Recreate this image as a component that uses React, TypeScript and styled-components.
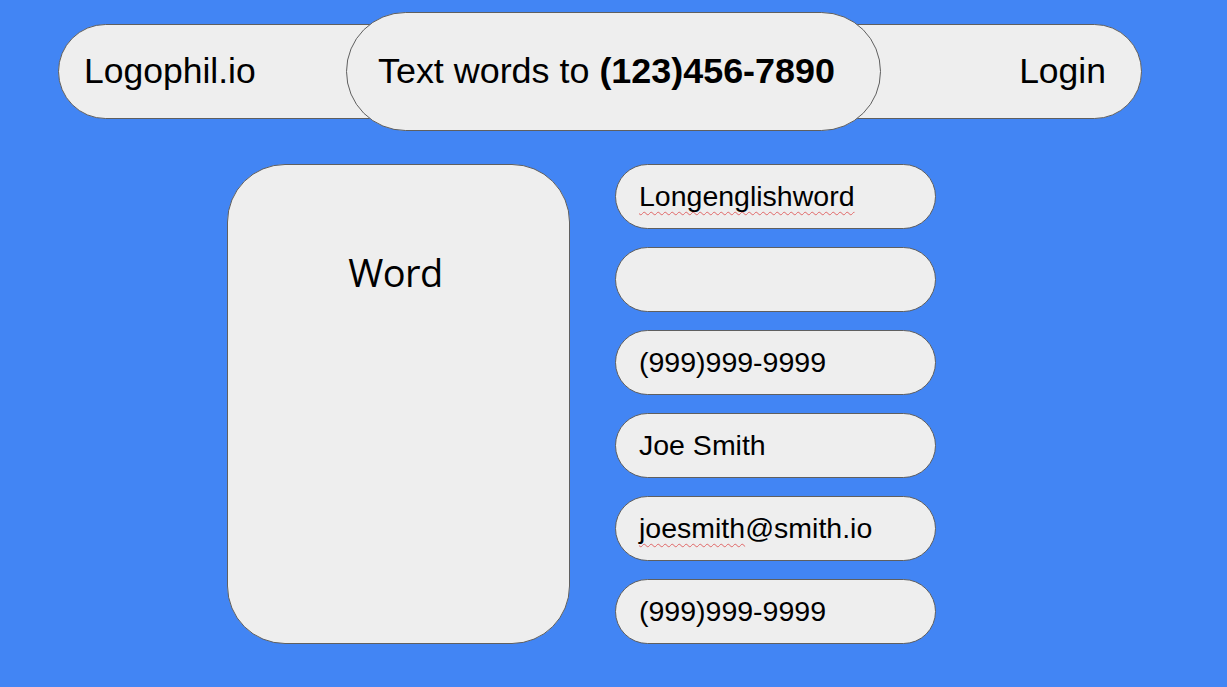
import React from "react";
import styled, { createGlobalStyle } from "styled-components";

const GlobalStyle = createGlobalStyle`
  html, body {
    margin: 0;
    padding: 0;
    background: #4285f4;
  }
  body {
    font-family: "Liberation Sans", Arial, sans-serif;
    color: #000;
    width: 1227px;
    height: 687px;
    overflow: hidden;
  }
`;

const Page = styled.div`
  width: 1227px;
  height: 687px;
  background: #4285f4;
  display: flex;
  flex-direction: column;
`;

const Header = styled.header`
  display: grid;
  grid-template-columns: 1fr;
  grid-template-rows: auto;
  padding-top: 12px;
`;

const Bar = styled.nav`
  grid-area: 1 / 1;
  align-self: start;
  margin: 12px 85px 0 58px;
  height: 95px;
  box-sizing: border-box;
  border: 1px solid #5f5f5f;
  border-radius: 48px;
  background: #eeeeee;
  display: flex;
  align-items: center;
  justify-content: space-between;
  padding: 0 35px 0 25px;
  font-size: 35.5px;
`;

const BarItem = styled.span`
  line-height: 1;
`;

const Banner = styled.div`
  grid-area: 1 / 1;
  justify-self: center;
  position: relative;
  z-index: 1;
  width: 535px;
  height: 119px;
  box-sizing: border-box;
  border: 1px solid #5f5f5f;
  border-radius: 60px;
  background: #eeeeee;
  display: flex;
  align-items: center;
  padding-left: 31px;
  font-size: 35.9px;
  white-space: nowrap;
`;

const Phone = styled.b`
  font-weight: 700;
`;

const Main = styled.main`
  display: flex;
  gap: 45px;
  margin: 33px 0 0 227px;
`;

const Card = styled.section`
  width: 343px;
  height: 480px;
  box-sizing: border-box;
  border: 1px solid #5f5f5f;
  border-radius: 58px;
  background: #eeeeee;
  display: flex;
  justify-content: center;
  padding: 88px 6px 0 0;
`;

const CardWord = styled.h1`
  margin: 0;
  font-family: "Open Sans", "Noto Sans", sans-serif;
  font-weight: 400;
  font-size: 38px;
  line-height: 1;
  letter-spacing: -0.5px;
`;

const Fields = styled.div`
  display: flex;
  flex-direction: column;
  gap: 18px;
`;

const Field = styled.div`
  width: 321px;
  height: 65px;
  box-sizing: border-box;
  border: 1px solid #5f5f5f;
  border-radius: 33px;
  background: #eeeeee;
  display: flex;
  align-items: center;
  padding-left: 23px;
  font-size: 28.5px;
  white-space: nowrap;
`;

const Misspelled = styled.span`
  text-decoration: underline wavy #e06666;
  text-decoration-thickness: 1px;
  text-underline-offset: 5px;
  text-decoration-skip-ink: none;
`;

export default function App() {
  return (
    <>
      <GlobalStyle />
      <Page>
        <Header>
          <Bar>
            <BarItem>Logophil.io</BarItem>
            <BarItem>Login</BarItem>
          </Bar>
          <Banner>
            Text words to&nbsp;<Phone>(123)456-7890</Phone>
          </Banner>
        </Header>
        <Main>
          <Card>
            <CardWord>Word</CardWord>
          </Card>
          <Fields>
            <Field>
              <Misspelled>Longenglishword</Misspelled>
            </Field>
            <Field />
            <Field>(999)999-9999</Field>
            <Field>Joe Smith</Field>
            <Field>
              <Misspelled>joesmith</Misspelled>@smith.io
            </Field>
            <Field>(999)999-9999</Field>
          </Fields>
        </Main>
      </Page>
    </>
  );
}
